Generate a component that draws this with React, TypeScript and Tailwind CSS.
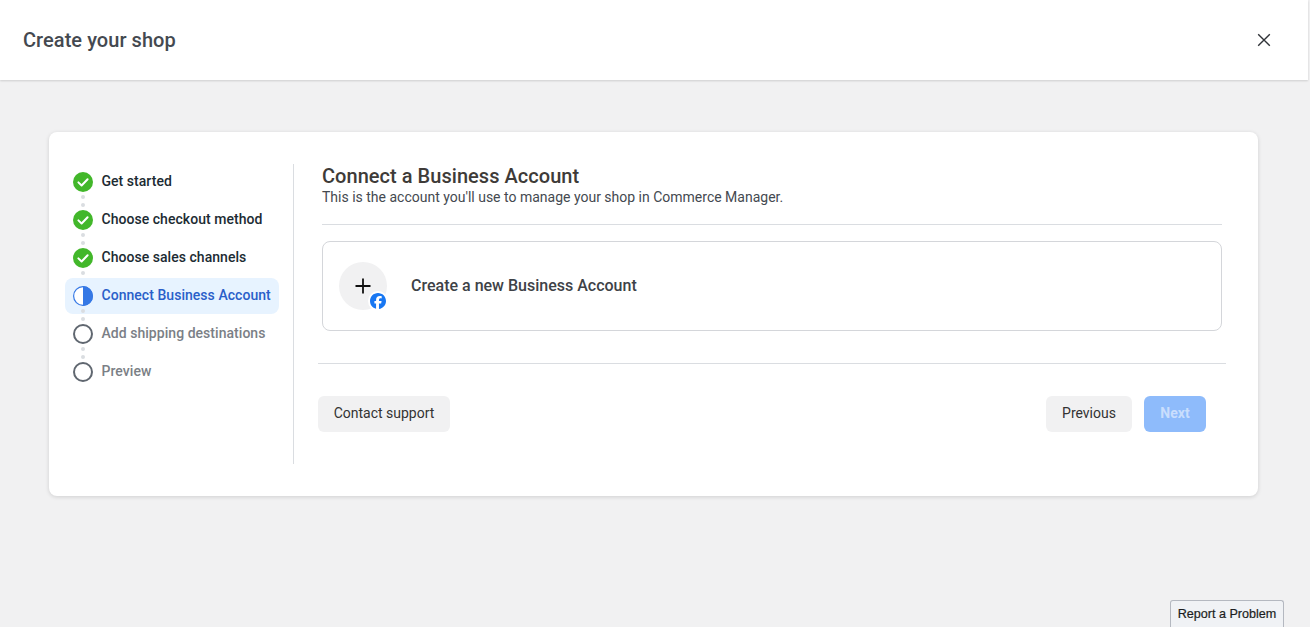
import React from "react";
import { FaFacebook } from "react-icons/fa6";

const steps = [
  { label: "Get started", state: "done" },
  { label: "Choose checkout method", state: "done" },
  { label: "Choose sales channels", state: "done" },
  { label: "Connect Business Account", state: "active" },
  { label: "Add shipping destinations", state: "todo" },
  { label: "Preview", state: "todo" },
];

function StepIcon({ state }: { state: string }) {
  if (state === "done") {
    return (
      <svg width="20" height="20" viewBox="0 0 20 20" className="shrink-0">
        <circle cx="10" cy="10" r="10" fill="#42b72a" />
        <path d="M5.4 10.4l3.2 3.1 6-6.3" fill="none" stroke="#fff" strokeWidth="2" strokeLinecap="round" strokeLinejoin="round" />
      </svg>
    );
  }
  if (state === "active") {
    return (
      <svg width="20" height="20" viewBox="0 0 20 20" className="shrink-0">
        <circle cx="10" cy="10" r="9.4" fill="#fff" stroke="#3578e5" strokeWidth="1.2" />
        <path d="M10 0a10 10 0 0 1 0 20z" fill="#3578e5" />
      </svg>
    );
  }
  return (
    <svg width="20" height="20" viewBox="0 0 20 20" className="shrink-0">
      <circle cx="10" cy="10" r="9" fill="none" stroke="#606770" strokeWidth="2" />
    </svg>
  );
}

export default function App() {
  return (
    <div className="relative h-[627px] w-full overflow-hidden bg-[#f1f1f2] font-['Roboto',sans-serif]">
      <header className="flex h-20 w-[1308px] items-center justify-between bg-white pl-[23px] pr-[36px] shadow-[0_1px_2px_rgba(0,0,0,0.15)]">
        <h1 className="text-[20px] font-medium leading-6 tracking-[0.05px] text-[#444950]">Create your shop</h1>
        <svg width="16" height="16" viewBox="0 0 16 16">
          <path d="M2.2 2.2l11.6 11.6M13.8 2.2L2.2 13.8" stroke="#303338" strokeWidth="1.4" fill="none" />
        </svg>
      </header>

      <main className="ml-[49px] mt-[52px] flex h-[364px] w-[1209px] rounded-lg bg-white pb-8 pl-4 pr-8 pt-8 shadow-[0_1px_4px_rgba(0,0,0,0.14)]">
        <nav className="flex h-[300px] w-[229px] shrink-0 flex-col gap-[2px] border-r border-[#dadde1] pr-[14px]">
          {steps.map((s, i) => (
            <div
              key={s.label}
              className={`relative flex h-9 w-[214px] items-center gap-[8.5px] rounded-lg pl-2 text-[14px] font-medium ${
                s.state === "active" ? "bg-[#e7f3ff] text-[#2a5fc9]" : s.state === "todo" ? "text-[#7b7f86]" : "text-[#1c2b33]"
              }`}
            >
              <StepIcon state={s.state} />
              <span className="-mt-[2px] leading-5 tracking-[0.04px]">{s.label}</span>
              {i < steps.length - 1 && (
                <>
                  <span className="absolute left-[16px] top-[31px] h-1 w-1 rounded-full bg-[#dadde1]" />
                  <span className="absolute left-[16px] top-[39px] h-1 w-1 rounded-full bg-[#dadde1]" />
                </>
              )}
            </div>
          ))}
        </nav>

        <section className="flex flex-1 flex-col pl-6">
          <div className="mx-1">
            <h2 className="text-[20px] font-medium leading-6 tracking-[0.04px] text-[#3e3b38]">Connect a Business Account</h2>
            <p className="text-[14px] leading-[18px] text-[#444950]">This is the account you'll use to manage your shop in Commerce Manager.</p>
            <div className="mt-[18px] h-px bg-[#dadde1]" />
            <div className="mt-4 flex h-[90px] items-center rounded-lg border border-[#d4d6da] pl-4">
              <div className="relative flex h-12 w-12 items-center justify-center rounded-full bg-[#f1f1f2]">
                <svg width="16" height="16" viewBox="0 0 16 16">
                  <path d="M8 0.5v15M0.5 8h15" stroke="#111" strokeWidth="1.8" fill="none" />
                </svg>
                <span className="absolute -bottom-[1px] -right-[1px] flex h-5 w-5 items-center justify-center rounded-full bg-white">
                  <FaFacebook className="h-4 w-4 text-[#1877f2]" />
                </span>
              </div>
              <span className="ml-6 text-[16px] font-medium text-[#3e4247]">Create a new Business Account</span>
            </div>
          </div>
          <div className="mt-8 h-px bg-[#dadde1]" />
          <div className="mt-8 flex items-center justify-between pr-5">
            <button className="h-9 w-[132px] rounded-md bg-[#f1f1f2] pb-[2px] text-[14px] text-[#333]">Contact support</button>
            <div className="flex gap-3">
              <button className="h-9 w-[86px] rounded-md bg-[#f1f1f2] pb-[2px] text-[14px] text-[#333]">Previous</button>
              <button className="h-9 w-[62px] rounded-md bg-[#8ebbfb] pb-[2px] text-[14px] font-bold text-[#c9defd]">Next</button>
            </div>
          </div>
        </section>
      </main>

      <button className="absolute bottom-0 left-[1170px] h-[27px] w-[114px] rounded-t-[3px] border border-b-0 border-[#b4b8c0] bg-[#f0f2f5] font-['Liberation_Sans',sans-serif] text-[12.6px] text-[#1c1e21] [-webkit-text-stroke:0.2px_#1c1e21]">
        Report a Problem
      </button>
    </div>
  );
}
